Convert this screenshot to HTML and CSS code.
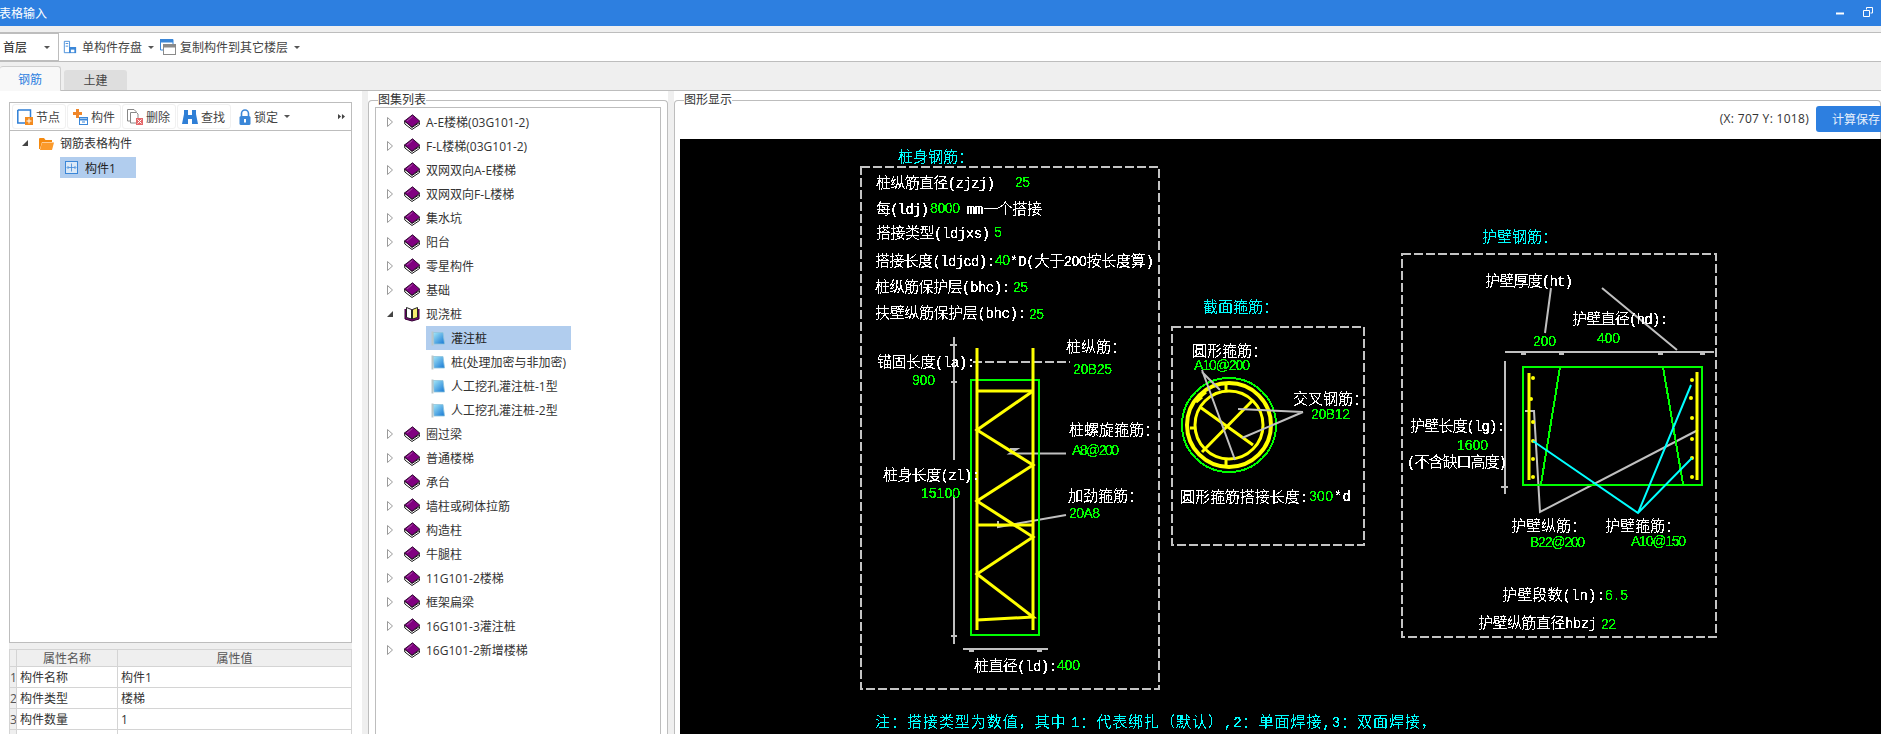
FILE: index.html
```html
<!DOCTYPE html>
<html lang="zh-CN">
<head>
<meta charset="utf-8">
<title>表格输入</title>
<link rel="stylesheet" href="styles.css">
</head>
<body>
<svg class="defs" width="0" height="0" aria-hidden="true">
  <defs>
    <linearGradient id="sheetfill" x1="0" y1="0" x2="1" y2="1">
      <stop offset="0" stop-color="#a6e8f8"/><stop offset="1" stop-color="#1577d4"/>
    </linearGradient>
    <filter id="hard" x="0" y="0" width="100%" height="100%" color-interpolation-filters="sRGB">
      <feComponentTransfer><feFuncA type="discrete" tableValues="0 1 1"/></feComponentTransfer>
    </filter>
    <symbol id="book" viewBox="0 0 16 16">
      <path d="M.6 7 .8 10 8 15.500 15.500 10.500 15.500 8.500 8 13.500Z" fill="#fff" stroke="#1c1c1c" stroke-width="1"/>
      <path d="M.5 7 8.500 .8 15.800 7.200 8 13Z" fill="#800080" stroke="#2e0a2e" stroke-width="1"/>
      <path d="M3 7 8.500 2.500" stroke="#a850a8" stroke-width="1" fill="none"/>
    </symbol>
    <symbol id="openbook" viewBox="0 0 16 16">
      <path d="M1 3V13L8 15 15 13V3" fill="#800080" stroke="#300030"/>
      <path d="M2.500 1.500 7.500 3.500V13L2.500 11.500Z" fill="#fff" stroke="#222"/>
      <path d="M13.500 1.500 8.500 3.500V13L13.500 11.500Z" fill="#f6ee70" stroke="#222"/>
    </symbol>
    <symbol id="sheet" viewBox="0 0 14 15">
      <path d="M2 1.500H12L13.500 13H3Z" fill="url(#sheetfill)" stroke="#8fc4dc" stroke-width=".8"/>
      <path d="M1.500 .5V14.500" stroke="#b9c6c9" stroke-width="2"/>
    </symbol>
    <symbol id="closed" viewBox="0 0 8 12"><path d="M1.500 1.500 6.500 6 1.500 10.500Z" fill="#fff" stroke="#9a9a9a"/></symbol>
    <symbol id="opened" viewBox="0 0 8 12"><path d="M7 3V9H1Z" fill="#444"/></symbol>
  </defs>
</svg>

<div class="app">
  <header class="titlebar">
    <span class="title">表格输入</span>
    <div class="winbtns">
      <svg class="winicon" viewBox="0 0 10 10"><path d="M1 6.500H9" stroke="#fff" stroke-width="2"/></svg>
      <svg class="winicon" viewBox="0 0 10 10"><path d="M3.500 2.500V.5H9.500V6H7.500M.5 3.500H6.500V9.500H.5Z" fill="none" stroke="#fff"/></svg>
    </div>
  </header>

  <div class="toolbar">
    <div class="combo"><span>首层</span><i class="caret"></i></div>
    <div class="tool">
      <svg class="ico14" viewBox="0 0 16 16"><path d="M1.500 1.500H7.500V14.500H1.500Z" fill="#fff" stroke="#3b87d8"/><path d="M3 4H6M3 7H6" stroke="#3b87d8"/><rect x="7" y="8" width="8" height="7" fill="#3b87d8"/><rect x="9" y="11" width="4" height="3" fill="#fff"/></svg>
      <span>单构件存盘</span><i class="caret"></i>
    </div>
    <div class="tool tool-copy">
      <svg class="ico16" viewBox="0 0 16 16"><path d="M.5 .5H13V11H.5Z" fill="#fff" stroke="#3b87d8"/><rect x="0" y="0" width="13" height="3.500" fill="#3b87d8"/><rect x="3.500" y="5.500" width="12" height="10" fill="#fff" stroke="#8a8a8a"/><rect x="3.500" y="5.500" width="12" height="3" fill="#8a8a8a"/></svg>
      <span>复制构件到其它楼层</span><i class="caret"></i>
    </div>
  </div>

  <nav class="tabs">
    <div class="tab active">钢筋</div>
    <div class="tab">土建</div>
  </nav>

  <main class="main">
    <section class="left">
      <div class="lefttools">
        <div class="btn"><svg class="ico16" viewBox="0 0 16 16"><path d="M.8 1H13.500V8M8 14H.8V1" fill="none" stroke="#2f7fd6" stroke-width="1.500"/><rect x="8" y="8" width="8" height="8" fill="#f28a1e"/><path d="M12 9.500V14.500M9.500 12H14.500" stroke="#fff"/></svg><span>节点</span></div>
        <div class="btn"><svg class="ico16" viewBox="0 0 16 16"><path d="M4 0H7V3H10V6H7V9H4V6H1V3H4Z" fill="#f0872a"/><rect x="7.500" y="8.500" width="8" height="7" fill="#fff" stroke="#3b87d8"/><path d="M7.500 10.500H15.500" stroke="#3b87d8" stroke-width="2"/><path d="M10 13H13" stroke="#3b87d8"/></svg><span>构件</span></div>
        <div class="btn"><svg class="ico16" viewBox="0 0 16 16"><path d="M.5 .5H7L9 2.500V12H.5Z" fill="#fff" stroke="#888"/><path d="M3.500 3.500H9.500L11 5V14H3.500Z" fill="#fff" stroke="#888"/><rect x="9" y="9" width="7" height="7" fill="#e4686a"/><path d="M10.500 10.500 14.500 14.500M14.500 10.500 10.500 14.500" stroke="#fff"/></svg><span>删除</span></div>
        <div class="btn"><svg class="ico16" viewBox="0 0 16 16"><path d="M2 1H6V6H10V1H14V5L16 15H10V10H6V15H0L2 5Z" fill="#2f7fd6"/></svg><span>查找</span></div>
        <div class="btn btn-plain"><svg class="ico16" viewBox="0 0 16 16"><path d="M4.500 7V4.500A3.500 3.500 0 0 1 11.500 4.500V7" fill="none" stroke="#3b87d8" stroke-width="1.600"/><rect x="2.500" y="7" width="11" height="9" rx="1.500" fill="#3b87d8"/><rect x="7" y="10" width="2" height="3.500" fill="#fff"/></svg><span>锁定</span><i class="caret"></i></div>
        <svg class="more" viewBox="0 0 8 8"><path d="M0 1 3.500 4 0 7ZM4.500 1 8 4 4.500 7Z" fill="#444"/></svg>
      </div>
      <div class="lefttree">
        <div class="trow">
          <svg class="arrow" viewBox="0 0 8 12"><use href="#opened"/></svg>
          <svg class="folder" viewBox="0 0 15 13"><path d="M0 2A1 1 0 0 1 1 1H5L6.500 3H13V5H3L1 12H0Z" fill="#f58a0f"/><path d="M3 5.500H15L13 13H1Z" fill="#fb9a2b"/></svg>
          <span>钢筋表格构件</span>
        </div>
        <div class="trow trow-child">
          <svg class="comp" viewBox="0 0 13 13"><rect x=".5" y=".5" width="12" height="12" fill="#dbe9f7" stroke="#3b87d8"/><path d="M6.500 2.500V10.500M2.500 6.500H10.500M3.500 5 2 6.500 3.500 8M9.500 5 11 6.500 9.500 8" fill="none" stroke="#3b87d8" stroke-width=".8"/></svg>
          <span>构件1</span>
        </div>
      </div>
      <div class="leftgap"></div>
      <table class="props">
        <colgroup><col class="c0"><col class="c1"><col class="c2"></colgroup>
        <tr class="head"><th></th><th>属性名称</th><th>属性值</th></tr>
        <tr><td class="num">1</td><td>构件名称</td><td>构件1</td></tr>
        <tr><td class="num">2</td><td>构件类型</td><td>楼梯</td></tr>
        <tr><td class="num">3</td><td>构件数量</td><td>1</td></tr>
        <tr><td class="num"></td><td></td><td></td></tr>
      </table>
    </section>

    <div class="splitter"></div>

    <fieldset class="group atlas">
      <legend>图集列表</legend>
      <div class="atlastree">
        <div class="arow"><svg class="arrow" viewBox="0 0 8 12"><use href="#closed"/></svg><svg class="bk" viewBox="0 0 16 16"><use href="#book"/></svg><span>A-E楼梯(03G101-2)</span></div>
        <div class="arow"><svg class="arrow" viewBox="0 0 8 12"><use href="#closed"/></svg><svg class="bk" viewBox="0 0 16 16"><use href="#book"/></svg><span>F-L楼梯(03G101-2)</span></div>
        <div class="arow"><svg class="arrow" viewBox="0 0 8 12"><use href="#closed"/></svg><svg class="bk" viewBox="0 0 16 16"><use href="#book"/></svg><span>双网双向A-E楼梯</span></div>
        <div class="arow"><svg class="arrow" viewBox="0 0 8 12"><use href="#closed"/></svg><svg class="bk" viewBox="0 0 16 16"><use href="#book"/></svg><span>双网双向F-L楼梯</span></div>
        <div class="arow"><svg class="arrow" viewBox="0 0 8 12"><use href="#closed"/></svg><svg class="bk" viewBox="0 0 16 16"><use href="#book"/></svg><span>集水坑</span></div>
        <div class="arow"><svg class="arrow" viewBox="0 0 8 12"><use href="#closed"/></svg><svg class="bk" viewBox="0 0 16 16"><use href="#book"/></svg><span>阳台</span></div>
        <div class="arow"><svg class="arrow" viewBox="0 0 8 12"><use href="#closed"/></svg><svg class="bk" viewBox="0 0 16 16"><use href="#book"/></svg><span>零星构件</span></div>
        <div class="arow"><svg class="arrow" viewBox="0 0 8 12"><use href="#closed"/></svg><svg class="bk" viewBox="0 0 16 16"><use href="#book"/></svg><span>基础</span></div>
        <div class="arow"><svg class="arrow" viewBox="0 0 8 12"><use href="#opened"/></svg><svg class="bk" viewBox="0 0 16 16"><use href="#openbook"/></svg><span>现浇桩</span></div>
        <div class="arow sub selected"><svg class="sh" viewBox="0 0 14 15"><use href="#sheet"/></svg><span>灌注桩</span></div>
        <div class="arow sub"><svg class="sh" viewBox="0 0 14 15"><use href="#sheet"/></svg><span>桩(处理加密与非加密)</span></div>
        <div class="arow sub"><svg class="sh" viewBox="0 0 14 15"><use href="#sheet"/></svg><span>人工挖孔灌注桩-1型</span></div>
        <div class="arow sub"><svg class="sh" viewBox="0 0 14 15"><use href="#sheet"/></svg><span>人工挖孔灌注桩-2型</span></div>
        <div class="arow"><svg class="arrow" viewBox="0 0 8 12"><use href="#closed"/></svg><svg class="bk" viewBox="0 0 16 16"><use href="#book"/></svg><span>圈过梁</span></div>
        <div class="arow"><svg class="arrow" viewBox="0 0 8 12"><use href="#closed"/></svg><svg class="bk" viewBox="0 0 16 16"><use href="#book"/></svg><span>普通楼梯</span></div>
        <div class="arow"><svg class="arrow" viewBox="0 0 8 12"><use href="#closed"/></svg><svg class="bk" viewBox="0 0 16 16"><use href="#book"/></svg><span>承台</span></div>
        <div class="arow"><svg class="arrow" viewBox="0 0 8 12"><use href="#closed"/></svg><svg class="bk" viewBox="0 0 16 16"><use href="#book"/></svg><span>墙柱或砌体拉筋</span></div>
        <div class="arow"><svg class="arrow" viewBox="0 0 8 12"><use href="#closed"/></svg><svg class="bk" viewBox="0 0 16 16"><use href="#book"/></svg><span>构造柱</span></div>
        <div class="arow"><svg class="arrow" viewBox="0 0 8 12"><use href="#closed"/></svg><svg class="bk" viewBox="0 0 16 16"><use href="#book"/></svg><span>牛腿柱</span></div>
        <div class="arow"><svg class="arrow" viewBox="0 0 8 12"><use href="#closed"/></svg><svg class="bk" viewBox="0 0 16 16"><use href="#book"/></svg><span>11G101-2楼梯</span></div>
        <div class="arow"><svg class="arrow" viewBox="0 0 8 12"><use href="#closed"/></svg><svg class="bk" viewBox="0 0 16 16"><use href="#book"/></svg><span>框架扁梁</span></div>
        <div class="arow"><svg class="arrow" viewBox="0 0 8 12"><use href="#closed"/></svg><svg class="bk" viewBox="0 0 16 16"><use href="#book"/></svg><span>16G101-3灌注桩</span></div>
        <div class="arow"><svg class="arrow" viewBox="0 0 8 12"><use href="#closed"/></svg><svg class="bk" viewBox="0 0 16 16"><use href="#book"/></svg><span>16G101-2新增楼梯</span></div>
      </div>
    </fieldset>

    <div class="splitter"></div>

    <fieldset class="group display">
      <legend>图形显示</legend>
      <div class="displayhead">
        <span class="coords">(X: 707 Y: 1018)</span>
        <button class="calc">计算保存</button>
      </div>
      <svg class="cad" width="1201" height="595" viewBox="680 139 1201 595">
        <!-- dashed frames -->
        <g class="dash">
          <rect x="861" y="167" width="298" height="522"/>
          <rect x="1172" y="327" width="192" height="218"/>
          <rect x="1402" y="254" width="314" height="383"/>
          <path d="M973 362H1070"/>
        </g>
        <!-- pile: gray dimension lines -->
        <g class="gray">
          <path d="M954 337V460M954 495V644"/>
          <path d="M950 345H957M951 382H957M951 636H957"/>
          <path d="M963 649H1048"/>
          <path d="M969 651H974M1037 651H1042"/>
          <path d="M1010 449H1017L1010 453.500H1066"/>
          <path d="M1066 515 998 527V521"/>
        </g>
        <!-- pile: rebar -->
        <rect class="green" x="971" y="380" width="68" height="255"/>
        <g class="yellow">
          <path d="M977 348V630M1033 348V630"/>
          <path d="M977 391H1033M977 525H1033"/>
          <path d="M1033 391 977 430 1033 465 977 501 1033 537 977 574 1033 617 977 620"/>
        </g>
        <!-- section: stirrup -->
        <circle class="green" cx="1229" cy="425" r="47"/>
        <g class="yellow">
          <circle cx="1229" cy="425" r="42" stroke-width="4"/>
          <circle cx="1229" cy="425" r="34" stroke-width="3"/>
          <path d="M1200 407 1253 445M1202 452 1253 400" stroke-width="3"/>
          <path d="M1196 402 1202 397M1200 397 1206 392M1226 383V391M1226 459V467M1190 428H1196"/>
        </g>
        <g class="gray">
          <path d="M1202 370 1235 460M1202 372 1220 390"/>
          <path d="M1303 412 1238 409M1303 412 1242 438"/>
        </g>
        <!-- wall: rebar -->
        <g class="gray">
          <path d="M1551 288 1545 333M1602 288 1677 350M1505 352H1714M1505 361V494"/>
          <path d="M1521 354H1526M1559 354H1564M1658 354H1663M1700 354H1705M1501 487H1508"/>
          <path d="M1525 411H1534L1540 512 1698 430"/>
        </g>
        <rect class="green" x="1523" y="367" width="179" height="118"/>
        <path class="green" d="M1560 367 1541 484M1663 367 1683 484"/>
        <path class="yellow" d="M1529 373V480M1697 372V480"/>
        <g class="dots">
          <circle cx="1533" cy="378" r="2"/><circle cx="1531" cy="399" r="2"/><circle cx="1533" cy="422" r="2"/><circle cx="1533" cy="441" r="2"/><circle cx="1533" cy="459" r="2"/><circle cx="1533" cy="477" r="2"/>
          <circle cx="1692" cy="380" r="2"/><circle cx="1691" cy="398" r="2"/><circle cx="1692" cy="418" r="2"/><circle cx="1692" cy="439" r="2"/><circle cx="1692" cy="458" r="2"/><circle cx="1692" cy="477" r="2"/>
        </g>
        <path class="cyan" d="M1533 441 1638 513 1692 458M1638 513 1691 385"/>

        <!-- labels -->
        <g class="labels">
          <text class="c" x="898" y="162" textLength="75">桩身钢筋：</text>
          <text class="w" x="876" y="188" textLength="119">桩纵筋直径<tspan class="l">(zjzj)</tspan></text>
          <text class="g" x="1015" y="187" textLength="15">25</text>
          <text class="w" x="876" y="214" textLength="53">每<tspan class="l">(ldj)</tspan></text>
          <text class="g" x="930" y="213" textLength="30">8000</text>
          <text class="w" x="967" y="214" textLength="75"><tspan class="l">mm</tspan>一个搭接</text>
          <text class="w" x="876" y="238" textLength="114">搭接类型<tspan class="l">(ldjxs)</tspan></text>
          <text class="g" x="994" y="237" textLength="7">5</text>
          <text class="w" x="875" y="266" textLength="120">搭接长度<tspan class="l">(ldjcd):</tspan></text>
          <text class="g" x="995" y="265" textLength="15">40</text>
          <text class="w" x="1010" y="266" textLength="144"><tspan class="l">*D(</tspan>大于<tspan class="d">200</tspan>按长度算<tspan class="l">)</tspan></text>
          <text class="w" x="875" y="292" textLength="135">桩纵筋保护层<tspan class="l">(bhc):</tspan></text>
          <text class="g" x="1013" y="292" textLength="15">25</text>
          <text class="w" x="875" y="318" textLength="151">扶壁纵筋保护层<tspan class="l">(bhc):</tspan></text>
          <text class="g" x="1029" y="319" textLength="15">25</text>
          <text class="w" x="1066" y="352" textLength="60">桩纵筋：</text>
          <text class="g" x="1073" y="374" textLength="39">20B25</text>
          <text class="w" x="877" y="367" textLength="98">锚固长度<tspan class="l">(la):</tspan></text>
          <text class="g" x="912" y="385" textLength="23">900</text>
          <text class="w" x="883" y="480" textLength="97">桩身长度<tspan class="l">(zl):</tspan></text>
          <text class="g" x="921" y="498" textLength="39">15100</text>
          <text class="w" x="1069" y="435" textLength="90">桩螺旋箍筋：</text>
          <text class="g" x="1072" y="455" textLength="47">A8@200</text>
          <text class="w" x="1068" y="501" textLength="75">加劲箍筋：</text>
          <text class="g" x="1069" y="518" textLength="31">20A8</text>
          <text class="w" x="974" y="671" textLength="83">桩直径<tspan class="l">(ld):</tspan></text>
          <text class="g" x="1057" y="670" textLength="23">400</text>
          <text class="c" x="875" y="727" textLength="561">注：搭接类型为数值，其中 <tspan class="l">1</tspan>：代表绑扎（默认）<tspan class="l">,2</tspan>：单面焊接<tspan class="l">,3</tspan>：双面焊接，</text>

          <text class="c" x="1203" y="312" textLength="75">截面箍筋：</text>
          <text class="w" x="1192" y="356" textLength="75">圆形箍筋：</text>
          <text class="g" x="1194" y="370" textLength="56">A10@200</text>
          <text class="w" x="1293" y="404" textLength="75">交叉钢筋：</text>
          <text class="g" x="1311" y="419" textLength="39">20B12</text>
          <text class="w" x="1180" y="502" textLength="128">圆形箍筋搭接长度<tspan class="l">:</tspan></text>
          <text class="g" x="1309" y="501" textLength="24">300</text>
          <text class="w" x="1334" y="501" textLength="17"><tspan class="l">*d</tspan></text>

          <text class="c" x="1482" y="242" textLength="75">护壁钢筋：</text>
          <text class="w" x="1485" y="286" textLength="88">护壁厚度<tspan class="l">(ht)</tspan></text>
          <text class="w" x="1572" y="324" textLength="96">护壁直径<tspan class="l">(hd):</tspan></text>
          <text class="g" x="1533" y="346" textLength="23">200</text>
          <text class="g" x="1597" y="343" textLength="23">400</text>
          <text class="w" x="1410" y="431" textLength="95">护壁长度<tspan class="l">(lg):</tspan></text>
          <text class="g" x="1457" y="450" textLength="31">1600</text>
          <text class="w" x="1407" y="467" textLength="100"><tspan class="l">(</tspan>不含缺口高度<tspan class="l">)</tspan></text>
          <text class="w" x="1511" y="531" textLength="75">护壁纵筋：</text>
          <text class="g" x="1530" y="547" textLength="55">B22@200</text>
          <text class="w" x="1605" y="531" textLength="75">护壁箍筋：</text>
          <text class="g" x="1631" y="546" textLength="55">A10@150</text>
          <text class="w" x="1502" y="600" textLength="103">护壁段数<tspan class="l">(ln):</tspan></text>
          <text class="g" x="1605" y="600" textLength="23">6.5</text>
          <text class="w" x="1478" y="628" textLength="119">护壁纵筋直径<tspan class="l">hbzj</tspan></text>
          <text class="g" x="1601" y="629" textLength="15">22</text>
        </g>
      </svg>
    </fieldset>
  </main>
</div>
</body>
</html>
```
FILE: styles.css
```css
* { box-sizing: border-box; }
html, body { margin: 0; padding: 0; }
body {
  width: 1881px;
  height: 734px;
  overflow: hidden;
  font-family: "Open Sans", "Noto Sans CJK SC", sans-serif;
  font-size: 12px;
  color: #333;
  background: #efefef;
}
svg { display: block; flex: none; }
.defs { position: absolute; }
.app { width: 1881px; height: 734px; display: flex; flex-direction: column; overflow: hidden; }

/* title bar */
.titlebar {
  height: 26px;
  background: #2d7fe0;
  color: #fff;
  display: flex;
  align-items: center;
  justify-content: space-between;
  flex: none;
}
.title { margin-left: -1px; }
.winbtns { display: flex; gap: 18px; margin-right: 8px; }
.winicon { width: 10px; height: 10px; margin-top: -2px; }

/* toolbar */
.toolbar {
  margin-top: 6px;
  height: 30px;
  flex: none;
  background: #fff;
  border-top: 1px solid #bdbdbd;
  border-bottom: 1px solid #bdbdbd;
  display: flex;
  align-items: center;
}
.combo {
  width: 59px;
  height: 28px;
  border: 1px solid #bdbdbd;
  border-left: 0;
  display: flex;
  align-items: center;
  justify-content: space-between;
  padding: 0 8px 0 3px;
  color: #222;
}
.tool { display: flex; align-items: center; margin-left: 4px; color: #444; }
.tool span { margin-left: 5px; margin-right: 6px; }
.tool-copy { margin-left: 6px; }
.tool-copy span { margin-left: 4px; }
.caret {
  display: block;
  width: 0;
  height: 0;
  border-left: 3px solid transparent;
  border-right: 3px solid transparent;
  border-top: 3px solid #555;
  flex: none;
}
.ico16 { width: 16px; height: 16px; }
.ico14 { width: 14px; height: 14px; }

/* tabs */
.tabs {
  height: 29px;
  flex: none;
  display: flex;
  align-items: flex-end;
  gap: 3px;
  border-bottom: 1px solid #bdbdbd;
  background: #efefef;
}
.tab {
  width: 63px;
  height: 20px;
  background: #dedede;
  border-radius: 3px 3px 0 0;
  text-align: center;
  line-height: 21px;
  color: #444;
}
.tab.active {
  width: 61px;
  height: 25px;
  margin-bottom: -1px;
  background: #f8f8f8;
  border: 1px solid #cfcfcf;
  border-left: 0;
  border-bottom: 0;
  color: #2d7fe0;
  line-height: 25px;
}

/* main */
.main {
  flex: 1;
  min-height: 0;
  display: flex;
  background: #fff;
}
.splitter { width: 6px; background: #efefef; flex: none; }
.left { width: 362px; flex: none; padding: 11px 10px 0 9px; }
.lefttools {
  height: 28px;
  border: 1px solid #bdbdbd;
  border-bottom: 0;
  display: flex;
  align-items: center;
  padding-left: 2px;
}
.btn {
  width: 54px;
  height: 25px;
  margin-right: 1px;
  border: 1px solid #f1f1f1;
  border-radius: 3px;
  display: flex;
  align-items: center;
  padding-left: 4px;
  gap: 3px;
  color: #444;
}
.btn-plain { width: 72px; border: 0; padding-left: 5px; gap: 1px; }
.btn-plain .caret { margin-left: 5px; }
.more { width: 7px; height: 7px; margin-left: auto; margin-right: 6px; }
.lefttree {
  height: 513px;
  border: 1px solid #bdbdbd;
  background: #fff;
}
.trow { display: flex; align-items: center; height: 24px; padding-left: 11px; color: #333; }
.trow .arrow { width: 8px; height: 12px; margin-right: 10px; }
.folder { width: 15px; height: 13px; margin-right: 6px; }
.trow-child {
  margin-left: 50px;
  width: 76px;
  height: 21px;
  padding-left: 5px;
  background: #b1cdee;
  color: #222;
  margin-top: 2px;
}
.comp { width: 13px; height: 13px; margin-right: 7px; }
.leftgap { height: 6px; background: #efefef; }
.props { width: 342px; border-collapse: collapse; table-layout: fixed; }
.c0 { width: 7px; }
.c1 { width: 101px; }
.c2 { width: 234px; }
.props th, .props td {
  border: 1px solid #d4d4d4;
  padding: 0 3px;
  height: 21px;
  font-weight: 400;
  color: #333;
  white-space: nowrap;
  overflow: hidden;
}
.props .head th { height: 17px; background: #efefef; color: #555; line-height: 15px; }
.props .num { background: #efefef; padding: 0; text-align: center; color: #555; }

/* group boxes */
.group {
  margin: 2px 0 0;
  border: 1px solid #bdbdbd;
  border-bottom: 0;
  border-radius: 4px 4px 0 0;
  min-width: 0;
  padding: 0;
  background: transparent;
}
.group legend {
  padding: 0;
  margin-left: 3px;
  height: 14px;
  line-height: 14px;
  background: #fff;
  color: #333;
}
.atlas { width: 300px; flex: none; padding: 0 6px; }
.atlastree {
  width: 286px;
  height: 640px;
  border: 1px solid #bdbdbd;
  border-bottom: 0;
  padding-top: 2px;
}
.arow { height: 24px; display: flex; align-items: center; padding-left: 10px; color: #333; }
.arrow { width: 8px; height: 12px; }
.bk { width: 16px; height: 16px; margin: 0 6px 0 10px; }
.arow.sub { padding-left: 50px; width: 196px; white-space: nowrap; }
.sh { width: 14px; height: 15px; margin: 0 6px 0 5px; }
.selected { background: #b1cdee; width: 145px !important; margin-left: 50px; padding-left: 0 !important; color: #222; }

.display { flex: 1; padding: 0 0 0 5px; }
.display legend { margin-left: 4px; }
.displayhead {
  height: 32px;
  display: flex;
  justify-content: flex-end;
  align-items: flex-start;
  gap: 7px;
  width: 1201px;
}
.coords { color: #333; line-height: 24px; margin-top: 0; letter-spacing: .3px; }
.calc {
  width: 65px;
  height: 26px;
  margin-top: -1px;
  border: 0;
  border-radius: 3px 0 0 3px;
  background: #2d7fe0;
  color: #e8f1fc;
  font: inherit;
  padding: 0 0 0 16px;
  text-align: left;
  white-space: nowrap;
  overflow: hidden;
}

/* CAD canvas */
.cad { background: #000; }
.cad .dash, .cad .gray, .cad .green, .cad .yellow, .cad .cyan { fill: none; }
.dash { stroke: #c4c4c4; stroke-width: 2; stroke-dasharray: 9 3; shape-rendering: crispEdges; }
.gray { stroke: #c0c0c0; stroke-width: 2; }
.green { stroke: #00ff00; stroke-width: 2; shape-rendering: crispEdges; }
.yellow { stroke: #ffff00; stroke-width: 3; }
.cyan { stroke: #00ffff; stroke-width: 2; }
.dots { fill: #ffff00; }
.labels { filter: url(#hard); }
.labels text {
  font-family: "Noto Sans CJK SC", sans-serif;
  font-size: 15px;
  font-weight: 300;
}
.labels .l { font-family: "Liberation Mono", monospace; font-size: 14px; }
.labels .d { font-family: "Liberation Sans", sans-serif; font-size: 14px; }
.labels .w { fill: #fff; }
.labels .c { fill: #00ffff; }
.labels .g { fill: #00ff00; font-family: "Liberation Sans", sans-serif; font-size: 14px; }
```
